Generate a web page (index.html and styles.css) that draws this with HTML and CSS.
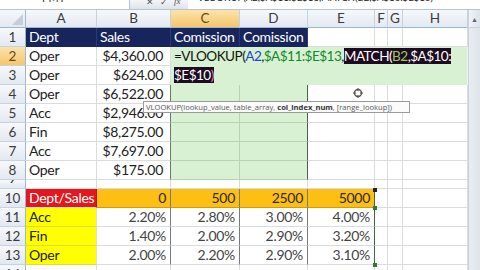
FILE: index.html
```html
<!DOCTYPE html>
<html lang="en">
   <head>
      <meta charset="UTF-8">
      <title>Comission lookup</title>
      <link rel="stylesheet" href="styles.css">
   </head>
   <body>
      <div class="fbar">
         <div class="namebox"><span>PMT</span></div>
         <div class="fbtns"><span>✕</span><span>✓</span><span class="fx">fx</span></div>
         <div class="ftext"><span>=VLOOKUP(A2,$A$11:$E$13,MATCH(B2,$A$10:$E$10)</span></div>
      </div>
      <div class="main">
         <div class="sheet">
            <div class="row hdr">
               <div class="c corner"><svg width="12" height="12" viewBox="0 0 12 12"><polygon points="12,1 12,12 1,12" fill="#c5cdd8"/></svg></div>
               <div class="c ch">A</div>
               <div class="c ch">B</div>
               <div class="c ch sel">C</div>
               <div class="c ch">D</div>
               <div class="c ch">E</div>
               <div class="c ch">F</div>
               <div class="c ch">G</div>
               <div class="c ch">H</div>
            </div>
            <div class="row">
               <div class="c rh">1</div>
               <div class="c navy">Dept</div>
               <div class="c navy">Sales</div>
               <div class="c navy">Comission</div>
               <div class="c navy">Comission</div>
               <div class="c"></div><div class="c"></div><div class="c"></div><div class="c"></div>
            </div>
            <div class="row">
               <div class="c rh sel">2</div>
               <div class="c">Oper</div>
               <div class="c num">$4,360.00</div>
               <div class="c green"></div><div class="c green"></div>
               <div class="c"></div><div class="c"></div><div class="c"></div><div class="c"></div>
            </div>
            <div class="row">
               <div class="c rh">3</div>
               <div class="c">Oper</div>
               <div class="c num">$624.00</div>
               <div class="c green"></div><div class="c green"></div>
               <div class="c"></div><div class="c"></div><div class="c"></div><div class="c"></div>
            </div>
            <div class="row">
               <div class="c rh">4</div>
               <div class="c">Oper</div>
               <div class="c num">$6,522.00</div>
               <div class="c green gl"></div><div class="c green gr"></div>
               <div class="c"></div><div class="c"></div><div class="c"></div><div class="c"></div>
            </div>
            <div class="row">
               <div class="c rh">5</div>
               <div class="c">Acc</div>
               <div class="c num">$2,946.00</div>
               <div class="c green gl"></div><div class="c green gr"></div>
               <div class="c"></div><div class="c"></div><div class="c"></div><div class="c"></div>
            </div>
            <div class="row">
               <div class="c rh">6</div>
               <div class="c">Fin</div>
               <div class="c num">$8,275.00</div>
               <div class="c green gl"></div><div class="c green gr"></div>
               <div class="c"></div><div class="c"></div><div class="c"></div><div class="c"></div>
            </div>
            <div class="row">
               <div class="c rh">7</div>
               <div class="c">Acc</div>
               <div class="c num">$7,697.00</div>
               <div class="c green gl"></div><div class="c green gr"></div>
               <div class="c"></div><div class="c"></div><div class="c"></div><div class="c"></div>
            </div>
            <div class="row">
               <div class="c rh">8</div>
               <div class="c">Oper</div>
               <div class="c num">$175.00</div>
               <div class="c green gl"></div><div class="c green gr"></div>
               <div class="c"></div><div class="c"></div><div class="c"></div><div class="c"></div>
            </div>
            <div class="row short">
               <div class="c rh"><span class="clip9">9</span></div>
               <div class="c"></div><div class="c"></div><div class="c"></div><div class="c"></div>
               <div class="c"></div><div class="c"></div><div class="c"></div><div class="c"></div>
            </div>
            <div class="row">
               <div class="c rh">10</div>
               <div class="c red">Dept/Sales</div>
               <div class="c orange num2 tb">0</div>
               <div class="c orange num2 tb">500</div>
               <div class="c orange num2 tb">2500</div>
               <div class="c orange num2 tb edge">5000</div>
               <div class="c"></div><div class="c"></div><div class="c"></div>
            </div>
            <div class="row">
               <div class="c rh">11</div>
               <div class="c yellow">Acc</div>
               <div class="c pct tb">2.20%</div>
               <div class="c pct tb">2.80%</div>
               <div class="c pct tb">3.00%</div>
               <div class="c pct tb edge">4.00%</div>
               <div class="c"></div><div class="c"></div><div class="c"></div>
            </div>
            <div class="row">
               <div class="c rh">12</div>
               <div class="c yellow">Fin</div>
               <div class="c pct tb">1.40%</div>
               <div class="c pct tb">2.00%</div>
               <div class="c pct tb">2.90%</div>
               <div class="c pct tb edge">3.20%</div>
               <div class="c"></div><div class="c"></div><div class="c"></div>
            </div>
            <div class="row">
               <div class="c rh">13</div>
               <div class="c yellow">Oper</div>
               <div class="c pct tb">2.00%</div>
               <div class="c pct tb">2.20%</div>
               <div class="c pct tb">2.90%</div>
               <div class="c pct tb edge">3.10%</div>
               <div class="c"></div><div class="c"></div><div class="c"></div>
            </div>
            <div class="row">
               <div class="c rh">14</div>
               <div class="c"></div><div class="c"></div><div class="c"></div><div class="c"></div>
               <div class="c"></div><div class="c"></div><div class="c"></div><div class="c"></div>
            </div>

            <!-- cell in edit mode, spills over C2:H3 -->
            <div class="editbox">=VLOOKUP(<span class="ref-a">A2</span>,<span class="ref-b">$A$11:$E$13</span>,<span class="hl">MATCH(<span class="ref-c">B2</span>,$A$10:</span><br><span class="hl">$E$10<span class="par">)</span></span></div>
            <div class="tip">VLOOKUP(lookup_value, table_array, <b>col_index_num</b>, [range_lookup])</div>
            <svg class="cursor" width="10" height="10" viewBox="0 0 10 10"><circle cx="5" cy="5" r="3.5" fill="none" stroke="#555" stroke-width="1.4"/><path d="M5 0v3M5 7v3M0 5h3M7 5h3" stroke="#555" stroke-width="1"/></svg>
            <div class="handle h1"></div>
            <div class="handle h2"></div>
            <div class="handle h3"></div>
         </div>
         <div class="vscroll">
            <div class="sarrow">▲</div>
         </div>
      </div>
   </body>
</html>
```

FILE: styles.css
```css
* {
box-sizing: border-box;
}
body {
margin: 0;
width: 480px;
height: 270px;
overflow: hidden;
background: #fff;
font-family: Lato, "Open Sans", sans-serif;
color: #222;
}
.fbar {
height: 10px;
display: flex;
overflow: hidden;
border-bottom: 1px solid #b6c3d4;
}
.namebox {
width: 130px;
padding-left: 42px;
font-size: 11px;
color: #333;
border-right: 1px solid #b6c3d4;
}
.namebox span,
.ftext span {
display: block;
margin-top: -9px;
line-height: 14px;
}
.fbtns {
width: 58px;
display: flex;
gap: 6px;
padding-left: 16px;
background: linear-gradient(#f3f5f8, #dfe4ea);
font-size: 9px;
color: #555;
line-height: 3px;
overflow: hidden;
}
.fbtns .fx {
font-style: italic;
font-family: "Liberation Serif", serif;
}
.ftext {
flex: 1;
padding-left: 4px;
font-size: 9.6px;
color: #222;
white-space: nowrap;
}
.main {
display: flex;
height: 260px;
}
.sheet {
position: relative;
width: 468px;
overflow: hidden;
}
.row {
display: grid;
grid-template-columns: 26px 71px 74px 69px 68px 67px 13px 15px 65px;
height: 19px;
}
.row.hdr {
height: 18px;
}
.row.short {
height: 9px;
}
.c {
border-right: 1px solid #dadcde;
border-bottom: 1px solid #dadcde;
padding: 0 3px;
font-size: 14px;
letter-spacing: -0.3px;
line-height: 18px;
white-space: nowrap;
overflow: hidden;
}
.ch,
.rh {
padding: 0;
text-align: center;
color: #3b3b3b;
font-size: 13.5px;
letter-spacing: 0;
background: linear-gradient(#f6f8fb, #e3e9f1);
}
.ch {
border-right: 1px solid #c8d2df;
border-bottom: 1px solid #9eb6ce;
line-height: 17px;
}
.rh {
border-right: 1px solid #9eb6ce;
border-bottom: 1px solid #c8d2df;
}
.corner {
display: flex;
align-items: flex-end;
justify-content: flex-end;
padding: 0 2px 2px 0;
background: linear-gradient(#f6f8fb, #e3e9f1);
border-right: 1px solid #9eb6ce;
border-bottom: 1px solid #9eb6ce;
}
.sel {
background: linear-gradient(#fbe3ad, #f6c66b);
color: #6b4a12;
}
.clip9 {
display: block;
margin-top: -11px;
}
.navy {
background: #17255c;
color: #fff;
border-right-color: #2a3a74;
border-bottom-color: #17255c;
}
.num {
text-align: right;
padding-right: 7px;
}
.num2,
.pct {
text-align: right;
padding-right: 4px;
}
.pct {
color: #444;
}
.green {
background: #d8f1d2;
border-bottom-color: #b9d2b4;
border-right-color: #b9d2b4;
}
.gl {
border-left: 1px solid #6b7b6b;
margin-left: -1px;
}
.gr {
border-right-color: #4f5f4f;
}
.red {
background: #e3171d;
color: #fff;
border-right-color: #b0141a;
}
.orange {
background: #fdbf14;
color: #2a2a2a;
border-bottom-color: #d59c00;
}
.yellow {
background: #ffff00;
color: #222;
border-bottom-color: #dede30;
}
.tb {
border-right-color: #7a7a7a;
}
.edge {
border-right-color: #3e6b3e;
}
.editbox {
position: absolute;
left: 171px;
top: 37px;
width: 297px;
height: 38px;
background: #d8f1d2;
border-right: 1px solid #eef6ec;
padding: 0 0 0 3px;
font-size: 13.6px;
letter-spacing: -0.55px;
line-height: 19px;
color: #111;
white-space: nowrap;
overflow: hidden;
}
.ref-a {
color: #1d48c8;
}
.ref-b {
color: #118a2e;
}
.hl {
background: #1d0b20;
color: #fff;
}
.ref-c {
color: #9cc46a;
}
.par {
color: #d28ad0;
}
.tip {
position: absolute;
left: 143px;
top: 91px;
width: 267px;
height: 12px;
background: #fbfbfb;
border: 1px solid #9a9a9a;
padding: 0 2px;
font-family: "Open Sans", sans-serif;
font-size: 7.6px;
line-height: 10px;
color: #5a5a5a;
white-space: nowrap;
overflow: hidden;
}
.tip b {
color: #333;
}
.cursor {
position: absolute;
left: 353px;
top: 78px;
}
.handle {
position: absolute;
width: 4px;
height: 4px;
left: 373px;
}
.h1 {
top: 178px;
background: #222;
}
.h2 {
top: 196px;
background: #2f7a2f;
}
.h3 {
top: 253px;
background: #2f7a2f;
}
.vscroll {
width: 12px;
background: linear-gradient(90deg, #e9edf2, #dfe4ea);
border-left: 1px solid #c9d1dc;
}
.sarrow {
height: 18px;
font-size: 7px;
line-height: 18px;
text-align: center;
color: #56657a;
background: linear-gradient(90deg, #f1f4f8, #dde3ea);
border-bottom: 1px solid #c9d1dc;
}
```
